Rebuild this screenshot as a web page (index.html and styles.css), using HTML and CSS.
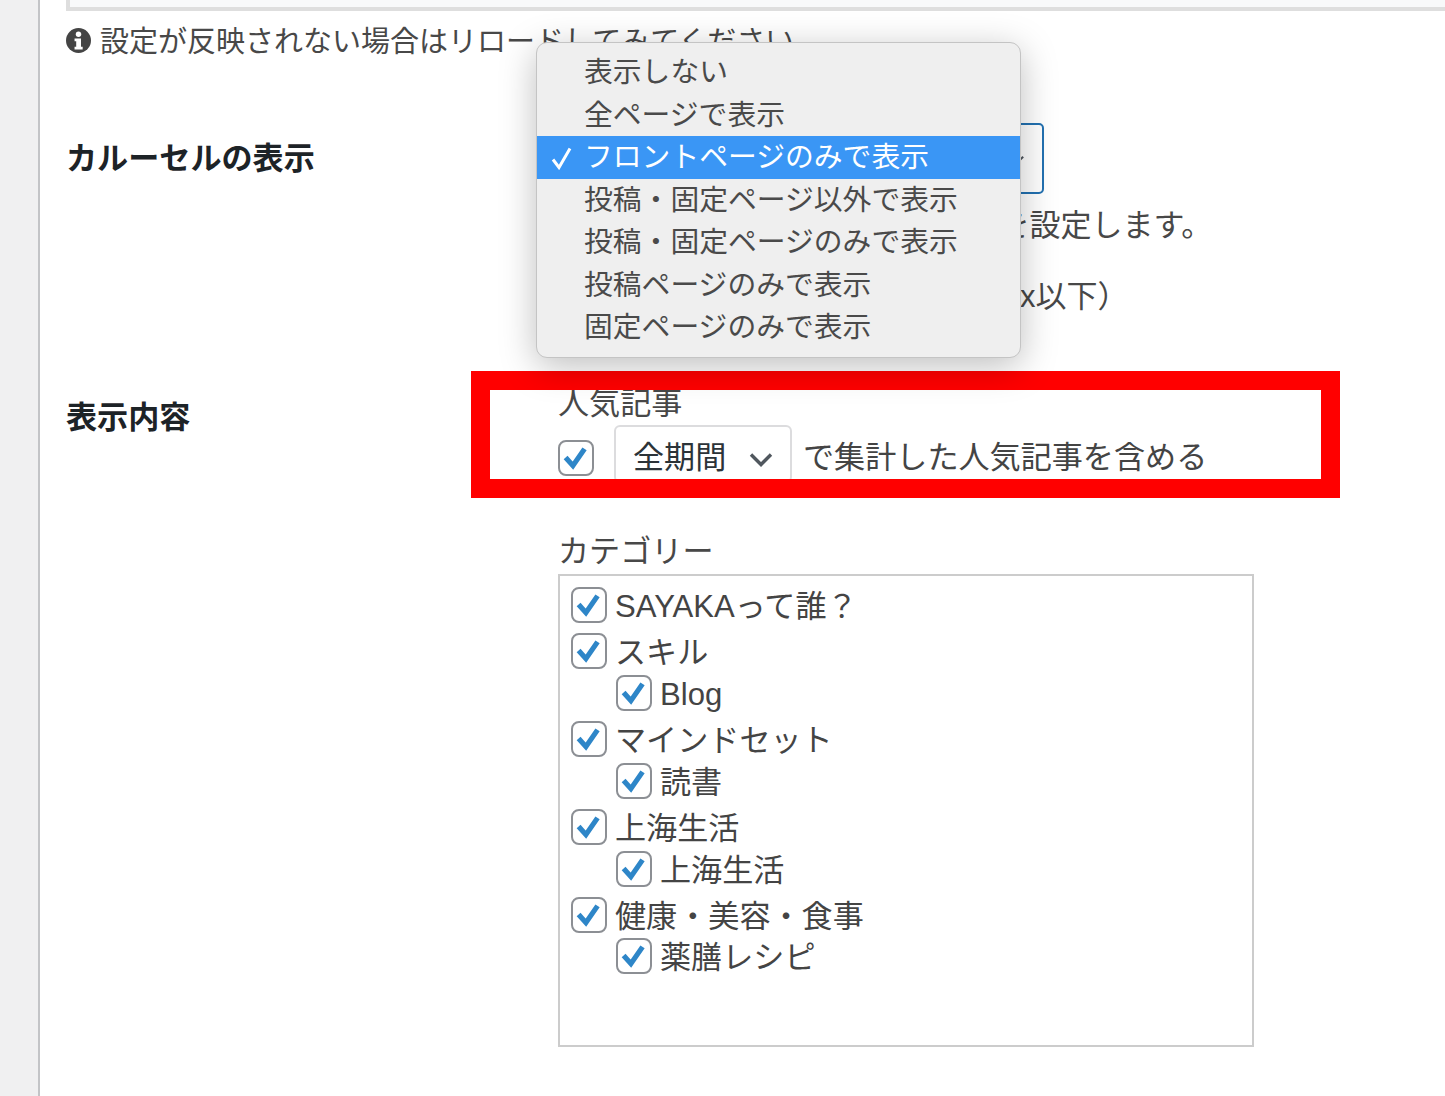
FILE: index.html
```html
<!DOCTYPE html>
<html lang="ja">
<head>
<meta charset="utf-8">
<title>カルーセルの表示</title>
<link rel="stylesheet" href="styles.css">
</head>
<body>
<svg class="defs" width="0" height="0" aria-hidden="true">
  <symbol id="tick" viewBox="0 0 36 36">
    <path d="M6.5 18l8.5 9.5L28.5 8" fill="none" stroke="#2e86c8" stroke-width="6"/>
  </symbol>
</svg>
<div class="app">
  <aside class="sidebar"></aside>
  <main class="main">
    <div class="top-box"></div>
    <p class="notice">
      <svg class="info" viewBox="0 0 24 24" aria-hidden="true">
        <circle cx="12" cy="12" r="12" fill="#444"/>
        <circle cx="12" cy="6" r="2.6" fill="#fff"/>
        <path d="M8.2 10h6.2v8h1.6v2.6H8.2V18h1.6v-5.4H8.2z" fill="#fff"/>
      </svg>
      <span class="notice-text">設定が反映されない場合はリロードしてみてください</span>
    </p>

    <section class="row row-carousel">
      <h2 class="row-label">カルーセルの表示</h2>
      <div class="row-body">
        <div class="select-focused"><span class="select-arrow"></span></div>
        <p class="desc">カルーセルを表示する各ページを設定します。</p>
        <p class="desc desc-second">モバイルでは非表示にする（80px以下）</p>
      </div>
    </section>

    <section class="row row-content">
      <h2 class="row-label label-content">表示内容</h2>
      <div class="row-body">
        <div class="field-title">人気記事</div>
        <div class="popular">
          <span class="check"><svg><use href="#tick"/></svg></span>
          <span class="period">全期間
            <svg class="chevron" viewBox="0 0 24 15" aria-hidden="true"><path d="M2 2.5l10 10 10-10" fill="none" stroke="#50575e" stroke-width="3.4"/></svg>
          </span>
          <span class="popular-text">で集計した人気記事を含める</span>
        </div>
        <div class="field-title title-category">カテゴリー</div>
        <ul class="cats">
          <li><label class="cat"><span class="check"><svg><use href="#tick"/></svg></span>SAYAKAって誰？</label></li>
          <li><label class="cat"><span class="check"><svg><use href="#tick"/></svg></span>スキル</label>
            <ul class="subcats"><li><label class="cat"><span class="check"><svg><use href="#tick"/></svg></span>Blog</label></li></ul></li>
          <li><label class="cat"><span class="check"><svg><use href="#tick"/></svg></span>マインドセット</label>
            <ul class="subcats"><li><label class="cat"><span class="check"><svg><use href="#tick"/></svg></span>読書</label></li></ul></li>
          <li><label class="cat"><span class="check"><svg><use href="#tick"/></svg></span>上海生活</label>
            <ul class="subcats"><li><label class="cat"><span class="check"><svg><use href="#tick"/></svg></span>上海生活</label></li></ul></li>
          <li><label class="cat"><span class="check"><svg><use href="#tick"/></svg></span>健康・美容・食事</label>
            <ul class="subcats"><li><label class="cat"><span class="check"><svg><use href="#tick"/></svg></span>薬膳レシピ</label></li></ul></li>
        </ul>
      </div>
    </section>
  </main>
</div>

<div class="highlight"></div>

<ul class="menu">
  <li>表示しない</li>
  <li>全ページで表示</li>
  <li class="selected"><svg class="menu-check" viewBox="0 0 24 24" aria-hidden="true"><path d="M3 13.5l6 8L20 2.5" fill="none" stroke="#fff" stroke-width="3"/></svg>フロントページのみで表示</li>
  <li>投稿・固定ページ以外で表示</li>
  <li>投稿・固定ページのみで表示</li>
  <li>投稿ページのみで表示</li>
  <li>固定ページのみで表示</li>
</ul>
</body>
</html>
```

FILE: styles.css
```css
* { box-sizing: border-box; }
html, body { margin: 0; height: 1096px; overflow: hidden; background: #fff; }
body {
  position: relative;
  font-family: "Liberation Sans", "Noto Sans CJK JP", sans-serif;
  color: #444;
}
.defs { position: absolute; }
ul { list-style: none; margin: 0; padding: 0; }
p, h2 { margin: 0; }

.app { display: flex; height: 1096px; }
.sidebar { width: 40px; flex: none; background: #f0f0f1; border-right: 2px solid #c3c4c7; }
.main { flex: 1; min-width: 0; padding-left: 26px; }

.top-box { height: 11px; background: #f8f9fa; border: solid #dedede; border-width: 0 0 4px 4px; }

.notice {
  display: flex; align-items: center; gap: 9px;
  height: 58px; font-size: 29px; line-height: 50px; white-space: nowrap; color: #484848;
}
.notice-text { padding-top: 4px; }
.info { width: 25px; height: 25px; flex: none; }

.row { display: grid; grid-template-columns: 492px 1fr; }
.row-label { font-size: 31.1px; font-weight: 700; line-height: 44px; color: #1d2327; }

.row-carousel { padding-top: 54px; height: 302px; }
.row-carousel .row-label { margin-top: 14px; }
.select-focused {
  position: relative;
  width: 486px; height: 71px;
  border: 2px solid #2271b1; border-radius: 5px;
}
.select-arrow {
  position: absolute; right: 20px; top: 28px;
  width: 9px; height: 9px;
  border: solid #50575e; border-width: 0 2px 2px 0; transform: rotate(45deg);
}
.desc { font-size: 31px; line-height: 42px; margin: 11px 0 0 7px; white-space: nowrap; color: #484848; }
.desc-second { margin-top: 29px; }

.label-content { margin-top: 13px; }
.field-title { font-size: 31.1px; line-height: 42px; color: #484848; }
.row-content { padding-top: 12px; }

.popular { display: flex; align-items: flex-start; height: 78px; font-size: 31.1px; }
.check {
  display: block; flex: none; width: 36px; height: 36px;
  background: #fff; border: 2.5px solid #8c8f94; border-radius: 8px;
}
.check svg { display: block; width: 31px; height: 31px; }
.popular .check { margin-top: 15px; }
.period {
  display: flex; align-items: center; justify-content: space-between;
  width: 178px; height: 58px; margin-left: 20px; padding: 0 17px;
  border: 2px solid #dcdcde; border-radius: 6px; font-size: 31.1px; color: #2c3338;
}
.chevron { width: 24px; height: 15px; margin-top: 10px; }
.popular-text { margin-left: 11px; line-height: 66px; }

.title-category { margin-top: 28px; }
.cats {
  width: 696px; height: 473px; margin-top: 1px; padding: 10px 11px;
  border: 2px solid #ccc; font-size: 31.1px;
}
.cats > li { margin-bottom: 4.4px; }
.cat { display: flex; align-items: center; gap: 8px; height: 41.7px; white-space: nowrap; line-height: 1; }
.cat .check { margin-bottom: 3px; }
.subcats { padding-left: 45px; }

.highlight {
  position: absolute; left: 471px; top: 371px; width: 869px; height: 127px;
  border: 19px solid #f00; pointer-events: none;
}

.menu {
  position: absolute; left: 536px; top: 42px; width: 485px; height: 316px;
  padding: 8px 0; background: #efefef;
  border: 1px solid #c4c4c4; border-radius: 11px;
  box-shadow: 0 8px 36px rgba(0, 0, 0, .26);
  font-size: 28.8px; color: #4a4a4a; overflow: hidden;
}
.menu li {
  position: relative; height: 42.5px; line-height: 42.5px; padding-left: 47px; white-space: nowrap;
}
.menu .selected { background: #3a96f5; color: #fff; }
.menu-check { position: absolute; left: 13px; top: 10px; width: 24px; height: 24px; }
```
